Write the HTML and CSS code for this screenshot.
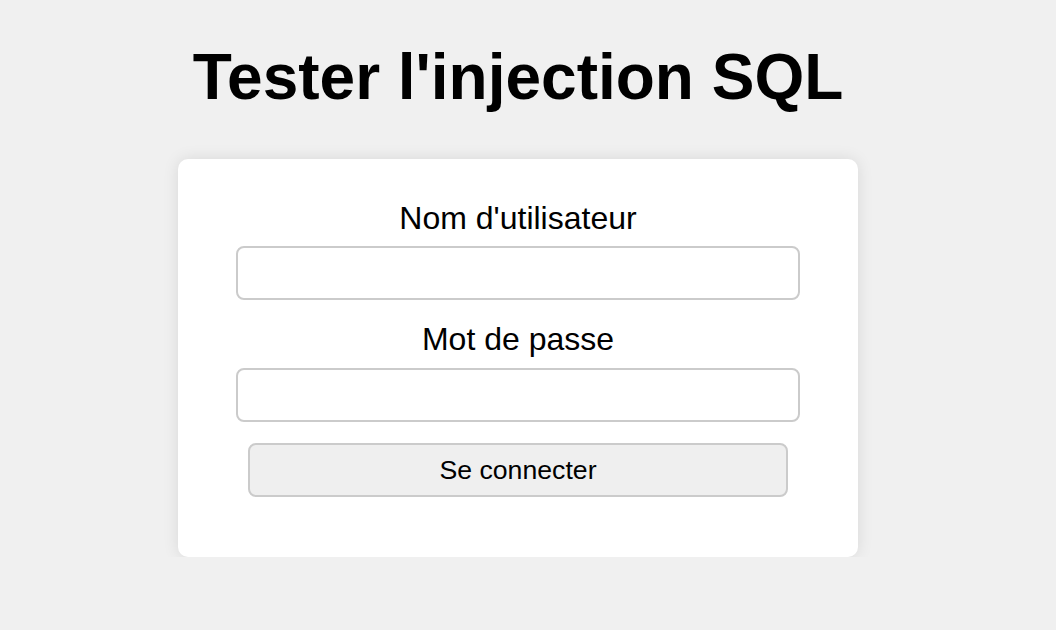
FILE: index.html
```html
<!DOCTYPE html>
<html lang="fr">
<head>
  <meta charset="UTF-8" />
  <title>Tester l'injection SQL</title>
  <link rel="stylesheet" href="styles.css">
</head>
<body>

  <div class="page">
    <h1>Tester l'injection SQL</h1>

    <!-- LOGIN FORM -->
    <form class="login-box" onsubmit="return false;">
      <label for="username">Nom d'utilisateur</label>
      <input type="text" id="username" name="username" />

      <label for="password" class="second">Mot de passe</label>
      <input type="password" id="password" name="password" />

      <button type="submit">Se connecter</button>
    </form>
  </div>

</body>
</html>
```

FILE: styles.css
```css
body {
  margin: 0;
  padding: 0 20px 0 0;
  background-color: #f0f0f0;
  font-family: "Liberation Sans", Arial, sans-serif;
  color: #000;
}

.page {
  width: 680px;
  margin: 0 auto;
  text-align: center;
}

h1 {
  font-size: 64px;
  line-height: 74px;
  margin: 40px -100px 45px;
  white-space: nowrap;
}

/* Login card */
.login-box {
  background-color: #fff;
  border-radius: 10px;
  box-shadow: 0 0 16px rgba(0, 0, 0, 0.1);
  padding: 41px 58px 60px;
}

.login-box label {
  display: block;
  font-size: 32px;
  line-height: 37px;
  margin-bottom: 9px;
}

.login-box label.second {
  margin-top: 21px;
  margin-bottom: 10px;
}

.login-box input {
  display: block;
  box-sizing: border-box;
  width: 100%;
  height: 54px;
  border: 2px solid #cbcbcb;
  border-radius: 8px;
  background: #fff;
  font-size: 26px;
  padding: 0 10px;
}

.login-box button {
  display: block;
  box-sizing: border-box;
  width: 540px;
  height: 54px;
  margin: 21px auto 0;
  border: 2px solid #cbcbcb;
  border-radius: 8px;
  background-color: #efefef;
  font-family: "Liberation Sans", Arial, sans-serif;
  font-size: 26.67px;
  color: #000;
  cursor: pointer;
}
```
